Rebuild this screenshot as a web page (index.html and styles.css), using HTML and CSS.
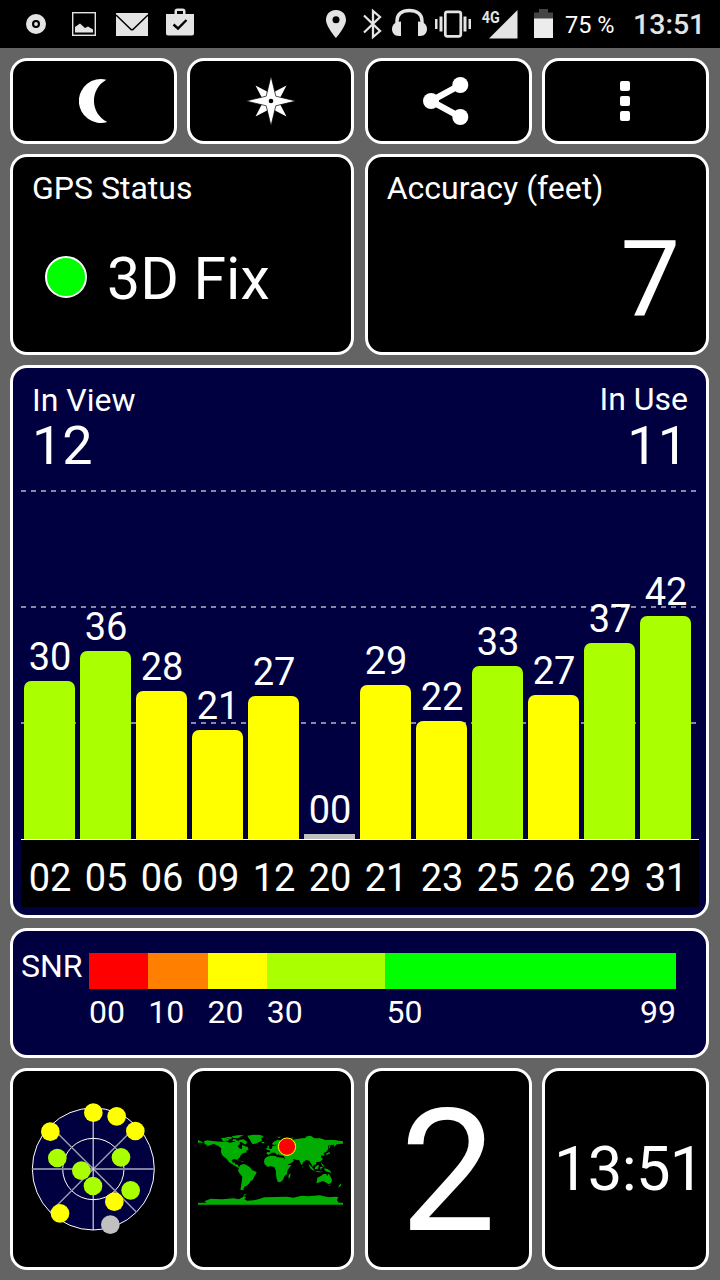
FILE: index.html
```html
<!DOCTYPE html>
<html lang="en">
<head>
<meta charset="utf-8">
<title>GPS Status</title>
<link rel="stylesheet" href="styles.css">
</head>
<body>
<header class="status-bar">
  <svg class="notifications" width="170" height="48" viewBox="26 0 170 48" fill="#e4e4e4">
    <circle cx="36" cy="24" r="7" fill="none" stroke="#e4e4e4" stroke-width="6"/><circle cx="36" cy="24" r="1.9"/>
    <rect x="72.7" y="12.7" width="22.6" height="22.6" fill="none" stroke="#e4e4e4" stroke-width="1.4"/>
    <path d="M75 32.500V27L80 23.500L85 28L88 26.500L93 29.500V32.500Z"/>
    <path d="M116 13H148V36H116Z"/><path d="M116 15L130 28.500Q132 31 134 28.500L148 15" fill="none" stroke="#000" stroke-width="1.5"/>
    <path d="M166 14H174.500V11.500Q174.500 8.500 177.500 8.500H182.500Q185.500 8.500 185.500 11.500V14H194V33.500Q194 35.500 192 35.500H168Q166 35.500 166 33.500ZM177 14H183V11H177Z" fill-rule="evenodd"/>
    <path d="M173.500 24.500L178 28.500L186.500 20" fill="none" stroke="#000" stroke-width="2.4"/>
  </svg>
  <svg width="230" height="48" viewBox="324 0 230 48" fill="#e4e4e4">
    <path d="M336 10C330 10 326 14.300 326 20C326 26.500 336 38 336 38S346 26.500 346 20C346 14.300 342 10 336 10ZM336 16.300A3.500 3.500 0 1 1 336 23.300A3.500 3.500 0 1 1 336 16.300Z" fill-rule="evenodd"/>
    <path d="M364 15.500L380 31L373 37V11L380 17L364 32.500" fill="none" stroke="#e4e4e4" stroke-width="2.300"/>
    <path d="M397 23V21C397 14 402 10.500 409.300 10.500S422 14 422 21V23" fill="none" stroke="#e4e4e4" stroke-width="3.400"/>
    <path d="M401 21.500V36H399C394 36 392 32.500 392 29C392 25 395 21.500 401 21.500ZM418 21.500V36H420C425 36 427 32.500 427 29C427 25 424 21.500 418 21.500Z"/>
    <rect x="445.300" y="11.800" width="15.500" height="24.500" rx="2" fill="none" stroke="#e4e4e4" stroke-width="2.700"/>
    <path d="M435 19H437.500V29H435ZM439.500 16.500H442.500V31.500H439.500ZM463.500 16.500H466.500V31.500H463.500ZM468.500 19H471V29H468.500Z"/>
    <text class="network-type" x="481.700" y="22.500" textLength="18" lengthAdjust="spacingAndGlyphs">4G</text>
    <path d="M517.500 10V38.500H489Z"/>
    <path d="M534 12.500H539V9H548V12.500H553V19H534Z" fill="#454545"/>
    <path d="M534 18.500H553V38H534Z" fill="#ececec"/>
  </svg>
  <span class="battery-level">75 %</span>
  <span class="clock">13:51</span>
</header>
<main class="dashboard">
  <button class="card button">
    <svg width="30" height="46" viewBox="236 234 90 138"><path d="M318 239A66 66 0 1 0 321 366C268 340 268 267 318 239Z" fill="#fff"/></svg>
  </button>
  <button class="card button">
    <svg width="48" height="48" viewBox="-24 -24 48 48">
      <path d="M-15.500 -15.500L-4 -9.500L0 -4L4 -9.500L15.500 -15.500L9.500 -4L4 0L9.500 4L15.500 15.500L4 9.500L0 4L-4 9.500L-15.500 15.500L-9.500 4L-4 0L-9.500 -4Z" fill="#fff"/>
      <path d="M0 -25L4.800 -4.800L25 0L4.800 4.800L0 25L-4.800 4.800L-25 0L-4.800 -4.800Z" fill="#fff" stroke="#000" stroke-width=".7"/>
      <circle r="2.300"/>
    </svg>
  </button>
  <button class="card button share">
    <svg width="46" height="50" viewBox="423 76 46 50" fill="#fff"><path d="M460.300 85L431 101L460.300 117" fill="none" stroke="#fff" stroke-width="6.500"/><circle cx="431" cy="101" r="8"/><circle cx="460.300" cy="85" r="8"/><circle cx="460.300" cy="117" r="8"/></svg>
  </button>
  <button class="card button">
    <svg width="10" height="40" viewBox="0 0 10 40" fill="#fff"><rect width="10" height="10" rx="2"/><rect y="15" width="10" height="10" rx="2"/><rect y="30" width="10" height="10" rx="2"/></svg>
  </button>

  <section class="card info">
    <h2 class="label">GPS Status</h2>
    <div class="fix"><span class="fix-light"></span><span class="fix-text">3D Fix</span></div>
  </section>
  <section class="card info">
    <h2 class="label">Accuracy (feet)</h2>
    <div class="accuracy">7</div>
  </section>

  <section class="card chart">
    <div class="counts">
      <div><div class="label">In View</div><div class="count">12</div></div>
      <div class="in-use"><div class="label">In Use</div><div class="count">11</div></div>
    </div>
    <div class="plot">
      <div class="column">30<span class="bar good" style="height:158px"></span></div>
      <div class="column">36<span class="bar good" style="height:188px"></span></div>
      <div class="column">28<span class="bar fair" style="height:148px"></span></div>
      <div class="column">21<span class="bar fair" style="height:109px"></span></div>
      <div class="column">27<span class="bar fair" style="height:143px"></span></div>
      <div class="column">00<span class="bar none" style="height:5px"></span></div>
      <div class="column">29<span class="bar fair" style="height:154px"></span></div>
      <div class="column">22<span class="bar fair" style="height:118px"></span></div>
      <div class="column">33<span class="bar good" style="height:173px"></span></div>
      <div class="column">27<span class="bar fair" style="height:144px"></span></div>
      <div class="column">37<span class="bar good" style="height:196px"></span></div>
      <div class="column">42<span class="bar good" style="height:223px"></span></div>
    </div>
    <div class="axis">
      <span>02</span><span>05</span><span>06</span><span>09</span><span>12</span><span>20</span><span>21</span><span>23</span><span>25</span><span>26</span><span>29</span><span>31</span>
    </div>
  </section>

  <section class="card snr">
    <span class="snr-title">SNR</span>
    <div class="scale">
      <span class="swatch weak"></span><span class="swatch low"></span><span class="swatch fair"></span><span class="swatch good"></span><span class="swatch strong"></span>
      <span>00</span><span>10</span><span>20</span><span>30</span><span class="last"><span>50</span><span>99</span></span>
    </div>
  </section>

  <section class="card tile">
    <svg width="126.670" height="140" viewBox="91 117 380 420">
      <circle cx="281" cy="327" r="183" fill="#000040" stroke="#fff" stroke-width="3"/>
      <circle cx="281" cy="327" r="92" fill="none" stroke="#fff" stroke-width="3"/>
      <path d="M98 327H464" stroke="#8080a0" stroke-width="6"/>
      <path d="M152 198L410 456M410 198L152 456" stroke="#9a9ab0" stroke-width="4.500"/>
      <path d="M280.500 144V510" stroke="#fff" stroke-width="3"/>
      <g fill="#ff0"><circle cx="281" cy="158" r="28"/><circle cx="351" cy="169" r="28"/><circle cx="407" cy="213" r="28"/><circle cx="152" cy="215" r="28"/><circle cx="181" cy="460" r="28"/><circle cx="344" cy="425" r="28"/></g>
      <g fill="#af0"><circle cx="173" cy="294" r="28"/><circle cx="364" cy="292" r="28"/><circle cx="245" cy="332" r="28"/><circle cx="280" cy="378" r="28"/><circle cx="393" cy="391" r="28"/></g>
      <circle cx="332" cy="494" r="28" fill="silver"/>
    </svg>
  </section>
  <section class="card tile">
    <svg class="map" width="145" height="73.330" viewBox="39 70 435 220" fill="#00ad00">
      <path d="M39 91L50 96L58 99L57 95L66 92L82 94L106 96L122 95L134 99L149 96L155 91L164 97L165 103L158 108L163 116L171 118L171 106L180 109L188 116L192 119L183 124L186 128L174 131L167 137L165 143L158 149L161 156L156 150L148 148L140 151L144 160L151 157L149 163L158 165L162 173L166 175L162 176L150 169L141 163L132 158L126 149L118 142L111 136L108 127L109 116L99 108L87 103L76 106L62 111L68 106L58 104L59 99L39 99Z"/>
      <path d="M108 86L117 84L133 87L130 93L114 94ZM119 83L136 81L143 84L137 88ZM144 89L154 89L153 94L142 94ZM140 80L158 77L177 76L168 80L160 86L145 85ZM162 91L175 89L187 97L181 105L171 98L160 96ZM187 78L205 75L226 76L235 80L229 86L231 93L216 100L206 104L200 101L195 90L191 86ZM229 97L239 97L236 101L230 100ZM160 151L169 154L178 156L173 157ZM181 111L188 111L189 116L184 117Z"/>
      <path d="M165 167L176 163L183 165L194 172L201 181L215 187L213 193L208 200L204 210L196 215L192 222L185 228L179 231L175 238L177 242L166 240L168 230L171 210L172 201L165 193L159 183L162 174ZM178 254L184 253L178 258L182 260L174 262Z"/>
      <path d="M246 141L258 138L269 138L278 143L295 144L304 155L309 166L319 166L310 178L306 187L306 194L298 200L294 211L286 218L278 216L275 207L273 195L273 184L268 173L259 170L247 171L239 164L237 156L239 147ZM311 195L317 191L315 203L310 207Z"/>
      <path d="M244 131L247 127L257 128L251 119L260 117L263 109L272 108L274 103L268 107L261 103L266 96L278 90L288 92L299 96L309 88L317 92L335 88L351 86L366 84L378 80L389 86L405 86L422 91L448 91L474 95L474 102L455 104L448 112L447 105L438 106L429 108L430 117L424 126L416 130L419 139L409 136L408 142L413 149L405 156L394 157L394 164L386 166L384 173L379 163L373 153L363 151L355 157L351 167L346 160L343 152L333 150L323 147L327 154L317 161L307 165L300 151L297 139L283 136L281 133L277 137L270 129L261 129L257 132L250 136ZM247 112L249 107L252 110L251 115L257 120L246 122ZM242 115L246 116L244 120ZM274 81L288 81L283 85ZM312 87L326 83L321 88ZM359 82L374 78L383 80L366 84ZM422 119L426 117L424 126ZM432 110L437 107L433 117ZM423 132L435 126L436 119L434 132L424 136ZM409 146L413 145L412 150Z"/>
      <path d="M370 163L377 168L388 181L388 184L377 177ZM391 171L400 165L402 169L398 179L389 178ZM389 184L401 185L415 187L399 188ZM405 172L415 171L409 177L407 182ZM408 157L413 164L419 172L411 168ZM417 176L428 178L436 184L439 190L427 186L420 183ZM352 169L355 172L352 173Z"/>
      <path d="M397 204L409 198L415 193L424 193L427 200L431 191L436 200L441 210L439 219L431 224L424 219L414 214L400 219L394 220L396 211ZM431 227L437 227L433 230ZM463 226L469 221L468 228L459 234Z"/>
      <path d="M39 279H65L58 275L77 267L111 269L146 266L161 269L174 262L183 262L178 269L187 273L206 272L222 268L238 263L272 262L307 261L325 264L350 258L369 260L405 257L430 263L451 261L460 263L456 272L461 279H474V285H39Z"/>
      <circle cx="306" cy="111" r="26" fill="red" stroke="#ff0" stroke-width="3"/>
    </svg>
  </section>
  <section class="card tile visible-count">2</section>
  <section class="card tile time">13:51</section>
</main>
</body>
</html>
```
FILE: styles.css
```css
* { box-sizing: border-box; }

body {
  margin: 0;
  width: 720px;
  height: 1280px;
  overflow: hidden;
  background: #646464;
  color: #fff;
  font-family: Roboto, "Liberation Sans", sans-serif;
}

svg { display: block; flex: none; }

.status-bar {
  display: flex;
  height: 48px;
  padding-left: 26px;
  background: #000;
  line-height: 50px;
  white-space: nowrap;
}
.notifications { margin-right: 128px; }
.network-type { font-size: 16px; font-weight: 700; }
.battery-level { width: 79px; padding-left: 11px; font-size: 23.5px; }
.clock { font-size: 28.5px; font-weight: 500; color: #e4e4e4; }

.dashboard {
  display: grid;
  grid-template-columns: repeat(4, 167px);
  grid-template-rows: 86px 201px 553px 130px 202px;
  gap: 10px 10.33px;
  padding: 10px;
}

.card {
  min-width: 0;
  border: 3px solid #fff;
  border-radius: 17px;
  background: #000;
}
.button {
  display: flex;
  align-items: center;
  justify-content: center;
  padding: 0;
}
.share { padding-right: 5px; }

.label {
  margin: 0;
  font-size: 32px;
  font-weight: 400;
  line-height: 32px;
}

.info { grid-column: span 2; padding: 15px 26px 0 19px; }
.fix { display: flex; padding: 45px 0 0 13px; }
.fix-light {
  width: 42px;
  height: 42px;
  margin: 7px 20px 0 0;
  border: 2px solid #fff;
  border-radius: 50%;
  background: #0f0;
}
.fix-text { font-size: 59px; line-height: 60px; }
.accuracy {
  padding-top: 22px;
  font-size: 106px;
  line-height: 106px;
  text-align: right;
}

.chart {
  grid-column: 1 / -1;
  padding: 16px 7px 0 8px;
  background: #000040;
}
.counts {
  display: flex;
  justify-content: space-between;
  height: 106px;
  padding: 0 11px;
}
.count { padding-top: 3px; font-size: 54px; line-height: 54px; }
.in-use { margin-top: -1px; text-align: right; }
.in-use .count { padding-top: 4px; }
.plot {
  --dash: repeating-linear-gradient(90deg, #8888a4 0 5px, transparent 5px 10px);
  display: grid;
  grid-template-columns: repeat(12, 51px);
  gap: 5px;
  align-items: end;
  height: 350px;
  padding-left: 3px;
  border-bottom: 1px solid #fff;
  background: var(--dash) 0 0 / 675px 2px no-repeat,
              var(--dash) 0 116px / 675px 2px no-repeat,
              var(--dash) 0 232px / 675px 2px no-repeat;
}
.column { font-size: 38px; line-height: 38px; text-align: center; text-indent: 1px; }
.bar { display: block; margin-top: 5px; border-radius: 7px 7px 0 0; }
.fair { background: #ff0; }
.good { background: #af0; }
.none { background: silver; border-radius: 0; }
.axis {
  display: grid;
  grid-template-columns: repeat(12, 51px);
  gap: 5px;
  height: 67px;
  padding: 19px 0 0 3px;
  background: #000;
  font-size: 38px;
  line-height: 38px;
  text-align: center;
  text-indent: 1px;
}

.snr {
  grid-column: 1 / -1;
  display: flex;
  padding: 22px 30px 0 8px;
  background: #000040;
  font-size: 32px;
  line-height: 32px;
}
.snr-title { width: 68px; margin-top: -3px; }
.scale {
  flex: 1;
  display: grid;
  grid-template-columns: 10fr 10fr 10fr 20fr 49fr;
  grid-template-rows: 36px 32px;
  row-gap: 7px;
}
.weak { background: red; }
.low { background: #ff8000; }
.strong { background: #0f0; }
.last { display: flex; justify-content: space-between; padding-left: 1px; }

.tile { display: flex; align-items: center; justify-content: center; }
.map { margin-top: 2px; }
.visible-count {
  align-items: flex-start;
  padding-top: 15px;
  font-size: 171px;
  line-height: 172px;
}
.time {
  justify-content: flex-start;
  padding-left: 9px;
  font-size: 61.5px;
  line-height: 62px;
  letter-spacing: -0.7px;
}
```
